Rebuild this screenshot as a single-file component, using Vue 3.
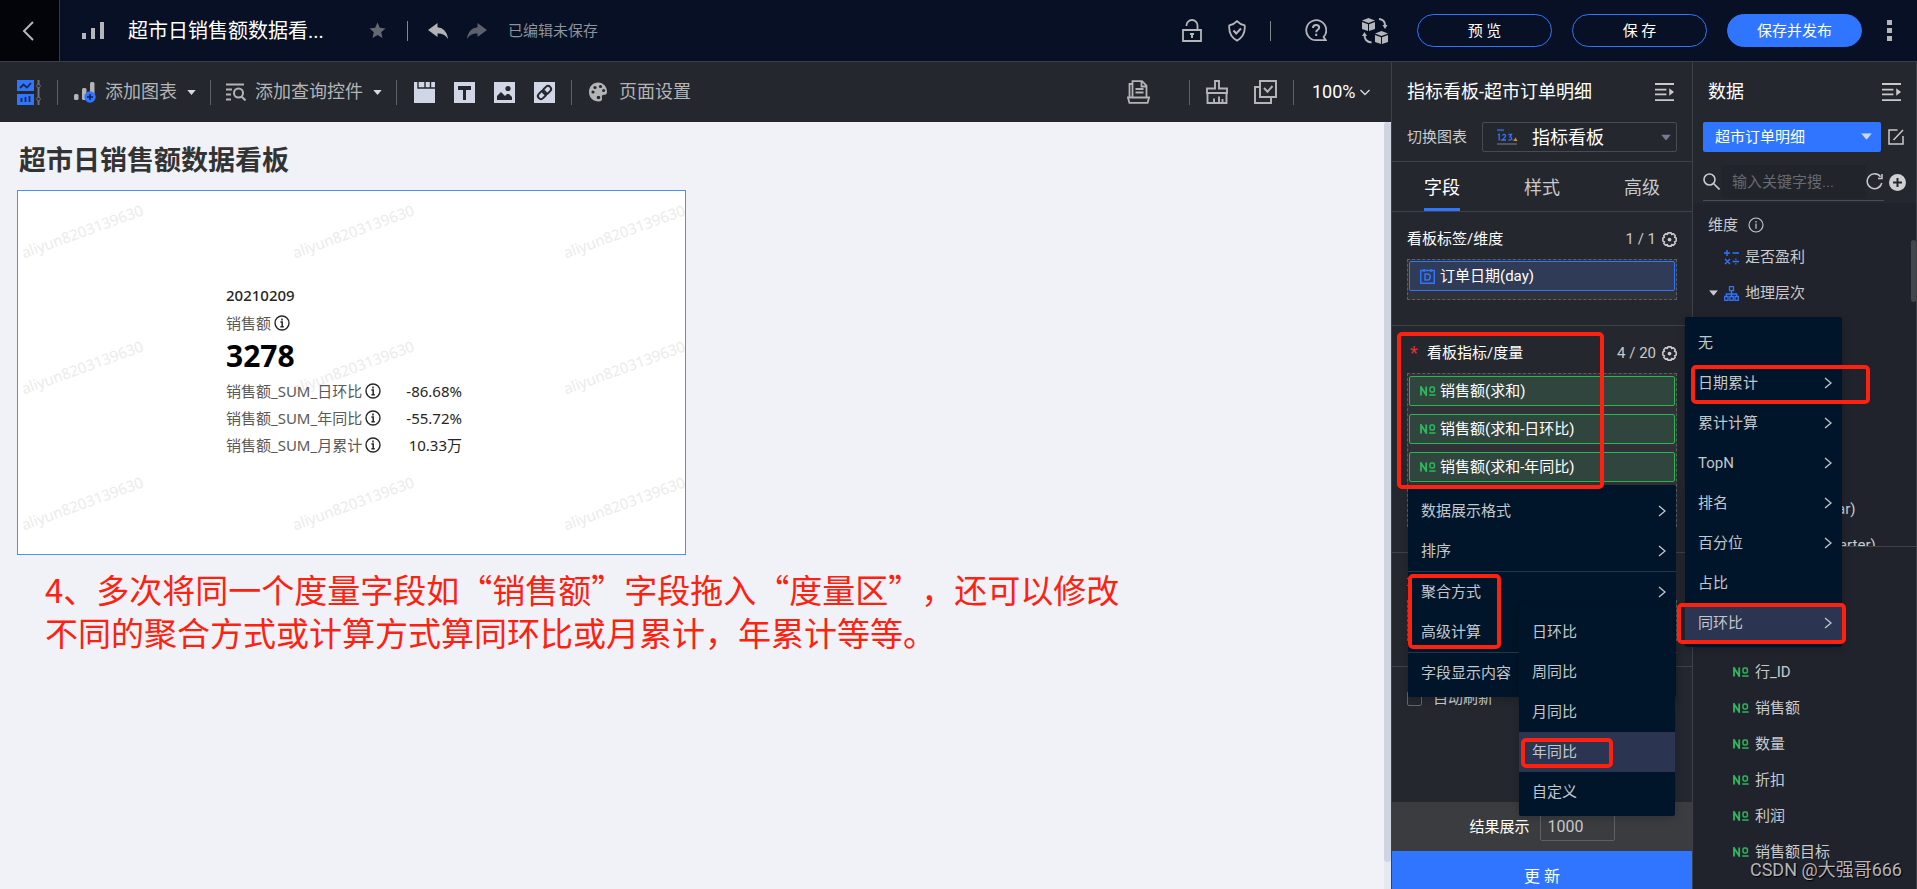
<script setup>
import { ref } from 'vue'

const chartType = ref('指标看板')
const dataset = ref('超市订单明细')
const zoomLevel = ref('100%')
const keyword = ref('')
const limit = ref('1000')
const autoRefresh = ref(false)
const activeTab = ref('字段')

const tabs = ['字段', '样式', '高级']
const measures = ['销售额(求和)', '销售额(求和-日环比)', '销售额(求和-年同比)']
const kpis = [
  { name: '销售额_SUM_日环比', value: '-86.68%' },
  { name: '销售额_SUM_年同比', value: '-55.72%' },
  { name: '销售额_SUM_月累计', value: '10.33万' },
]
const geoFields = ['区域', '省份', '城市', '产品', '订单日期', '订单日期(year)', '订单日期(quarter)']
const measureFields = ['成本', '运费', '行_ID', '销售额', '数量', '折扣', '利润', '销售额目标']
const fieldMenu = [
  { label: '数据展示格式', arrow: true },
  { label: '排序', arrow: true, line: true },
  { label: '聚合方式', arrow: true },
  { label: '高级计算', arrow: true, line: true },
  { label: '字段显示内容', arrow: false },
]
const calcMenu = [
  { label: '无' },
  { label: '日期累计', arrow: true },
  { label: '累计计算', arrow: true },
  { label: 'TopN', arrow: true },
  { label: '排名', arrow: true },
  { label: '百分位', arrow: true },
  { label: '占比' },
  { label: '同环比', arrow: true, on: true },
]
const ratioMenu = [
  { label: '日环比' },
  { label: '周同比' },
  { label: '月同比' },
  { label: '年同比', on: true },
  { label: '自定义' },
]
</script>

<template>
  <div class="app">
    <svg class="sprite" aria-hidden="true">
      <symbol id="i-info" viewBox="0 0 16 16">
        <circle cx="8" cy="8" r="7" fill="none" stroke="currentColor" stroke-width="1.4" />
        <path d="M8 3.6v2M6.4 7h1.8v4.6M6.4 11.8h3.4" fill="none" stroke="currentColor" stroke-width="1.5" />
      </symbol>
      <symbol id="i-info-thin" viewBox="0 0 16 16">
        <circle cx="8" cy="8" r="7" fill="none" stroke="currentColor" stroke-width="1.1" />
        <path d="M8 4v1.4M8 6.6v5.2" fill="none" stroke="currentColor" stroke-width="1.2" />
      </symbol>
      <symbol id="i-gear" viewBox="0 0 16 16">
        <path d="M6.300 .9h3.400l.6 1.700 1.700-.8 2.200 2.200-.8 1.700 1.700.6v3.400l-1.700.6.8 1.700-2.200 2.200-1.700-.8-.6 1.700H6.300l-.6-1.700-1.700.8L1.800 12l.8-1.700L.9 9.700V6.300l1.700-.6L1.800 4 4 1.800l1.700.8z" fill="none" stroke="currentColor" stroke-width="1.700" stroke-linejoin="round" />
        <circle cx="8" cy="8" r="2" fill="currentColor" />
      </symbol>
      <symbol id="i-fold" viewBox="0 0 20 20">
        <path d="M0 1.5h20M0 7.500h12M0 12.500h12M0 18.500h20" fill="none" stroke="currentColor" stroke-width="2" />
        <path d="M15 6l5 4-5 4z" fill="currentColor" />
      </symbol>
      <symbol id="i-right" viewBox="0 0 8 12">
        <path d="M1 1l6 5-6 5" fill="none" stroke="currentColor" stroke-width="1.3" />
      </symbol>
      <symbol id="i-caret" viewBox="0 0 10 6">
        <path d="M0 0h10L5 6z" fill="currentColor" />
      </symbol>
      <symbol id="i-no" viewBox="0 0 16 10">
        <path d="M1 9.5V1l5.2 8V.5" fill="none" stroke="currentColor" stroke-width="1.8" />
        <rect x="10" y="1" width="4.4" height="5" rx="1.6" fill="none" stroke="currentColor" stroke-width="1.5" />
        <path d="M9.2 9h6.4" stroke="currentColor" stroke-width="1.5" />
      </symbol>
    </svg>

    <header class="topbar">
      <button class="back" aria-label="返回">
        <svg width="12" height="20" viewBox="0 0 12 20"><path d="M11 1L2 10l9 9" fill="none" stroke="currentColor" stroke-width="2" /></svg>
      </button>
      <svg class="logo" width="22" height="18" viewBox="0 0 22 18"><path d="M0 11h4v6H0zM9 6h4v11H9zM18 0h4v17h-4z" fill="#b5b6b9" /></svg>
      <h1 class="doc-title">超市日销售额数据看...</h1>
      <button class="star" aria-label="收藏">
        <svg width="17" height="17" viewBox="0 0 17 17"><path d="M8.500 .5l2.300 5.300 5.700.6-4.300 3.800 1.300 5.800-5-3-5 3 1.300-5.800L.5 6.400l5.700-.6z" fill="#646872" /></svg>
      </button>
      <span class="vline"></span>
      <button class="undo" aria-label="撤销">
        <svg width="20" height="16" viewBox="0 0 20 16"><path d="M9.500 0v4.200C15.500 4.800 19.300 9 20 16c-2.500-4.200-5.500-5.600-10.500-5.600V14L0 7z" fill="#b2b3b5" /></svg>
      </button>
      <button class="redo" aria-label="重做">
        <svg width="20" height="16" viewBox="0 0 20 16"><path d="M10.500 0v4.200C4.500 4.800.7 9 0 16c2.500-4.200 5.500-5.600 10.500-5.600V14L20 7z" fill="#5c606b" /></svg>
      </button>
      <span class="saved">已编辑未保存</span>

      <div class="top-right">
        <button class="tb" aria-label="解锁">
          <svg width="20" height="23" viewBox="0 0 20 23"><path d="M1 11h18v11H1zM4.500 7V6.500a5.500 5.500 0 0 1 11 0V11" fill="none" stroke="currentColor" stroke-width="1.800" /><path d="M8 14h4v2h-1v3H9v-3H8z" fill="currentColor" /></svg>
        </button>
        <button class="tb shield" aria-label="权限">
          <svg width="18" height="22" viewBox="0 0 18 22"><path d="M9 1.200C7 3.500 4 4.800 1.300 5.400c-.6 6 1 11.600 7.700 15.200 6.700-3.600 8.300-9.200 7.700-15.200C14 4.800 11 3.500 9 1.200z" fill="none" stroke="currentColor" stroke-width="1.800" /><path d="M5.500 10.500L8.200 13.500l4.800-5" fill="none" stroke="currentColor" stroke-width="2" /></svg>
        </button>
        <span class="vline"></span>
        <button class="tb help" aria-label="帮助">
          <svg width="22" height="23" viewBox="0 0 22 23"><path d="M20.800 21.200H11A10 10 0 1 1 18.600 18z" fill="none" stroke="currentColor" stroke-width="1.800" /><path d="M8 9c0-4 6.200-3.600 6.200-.4 0 2.200-3 2.200-3 4.600M11.200 14.800V17" fill="none" stroke="currentColor" stroke-width="2" /></svg>
        </button>
        <button class="tb cubes" aria-label="资源">
          <svg width="26" height="26" viewBox="0 0 26 26"><g fill="currentColor"><path d="M0 2.500L6.500 0 13 2.500 6.500 5zM0 4l6 2.200V13l-6-2zM13 4L7 6.200V13l6-2zM13 15.500l6.500-2.500 6.500 2.500-6.500 2.500zM13 17l6 2.200V26l-6-2zM26 17l-6 2.200V26l6-2zM20.500 7h5l-2.500 4zM0 18h5l-2.500-4z" /></g><path d="M17 1c4 .5 6 3 6 6M2.500 17c0 4 2.500 7 7 7.500" fill="none" stroke="currentColor" stroke-width="2" /></svg>
        </button>
        <button class="pill">预 览</button>
        <button class="pill">保 存</button>
        <button class="pill primary">保存并发布</button>
        <button class="tb kebab" aria-label="更多">
          <svg width="6" height="21" viewBox="0 0 6 21"><path d="M1 0h5v5H1zM1 8h5v5H1zM1 16h5v5H1z" fill="currentColor" /></svg>
        </button>
      </div>
    </header>

    <div class="main">
      <section class="work">
        <div class="toolbar">
          <button class="tool" aria-label="布局">
            <svg width="24" height="25" viewBox="0 0 24 25"><path d="M0 0h17v11H0zM0 14h17v11H0z" fill="#2f75ff" /><path d="M3 8l3.500-3.500L10 7.500l4-4.500M4.500 22v-4M8.500 22v-5M12.500 22v-6" fill="none" stroke="#1d2a48" stroke-width="1.800" /><path d="M21.500 0v25" stroke="#6d7076" stroke-width="2" /><circle cx="21.500" cy="6" r="1.800" fill="#24272e" stroke="#6d7076" /><circle cx="21.500" cy="19" r="1.800" fill="#24272e" stroke="#6d7076" /></svg>
          </button>
          <span class="sep"></span>
          <button class="tool text">
            <svg width="22" height="21" viewBox="0 0 22 21"><rect y="12" width="4.500" height="6" rx="1.500" fill="#b3b4b6" /><rect x="8" y="6" width="4.500" height="12" rx="1.500" fill="#b3b4b6" /><rect x="16" width="4.500" height="18" rx="1.500" fill="#b3b4b6" /><circle cx="16" cy="15" r="5.700" fill="#2f75ff" /><path d="M13 15h6M16 12v6" stroke="#0e2352" stroke-width="1.500" /></svg>
            <span>添加图表</span>
            <svg class="caret" width="9" height="5"><use href="#i-caret" /></svg>
          </button>
          <span class="sep"></span>
          <button class="tool text query">
            <svg width="20" height="18" viewBox="0 0 20 18"><path d="M0 1.500h18M0 6.500h6M0 11.500h5M0 16.500h5" stroke="#b3b4b6" stroke-width="2" /><circle cx="12.500" cy="10" r="4.500" fill="none" stroke="#b3b4b6" stroke-width="2" /><path d="M15.500 13.500l4 4" stroke="#b3b4b6" stroke-width="2" /></svg>
            <span>添加查询控件</span>
            <svg class="caret" width="9" height="5"><use href="#i-caret" /></svg>
          </button>
          <span class="sep"></span>
          <div class="squares">
            <button aria-label="页签"><svg width="21" height="21" viewBox="0 0 21 21"><path d="M0 0h21v21H0z" fill="#d0d6e6" /><path d="M4 0v6h17M11 0v5.500M16.500 0v5.500" fill="none" stroke="#24272e" stroke-width="1.400" /></svg></button>
            <button aria-label="文本"><svg width="21" height="21" viewBox="0 0 21 21"><path d="M0 0h21v21H0z" fill="#d0d6e6" /><path d="M4 4h13v4h-5v10H9V8H4z" fill="#24272e" /></svg></button>
            <button aria-label="图片"><svg width="21" height="21" viewBox="0 0 21 21"><path d="M0 0h21v21H0z" fill="#d0d6e6" /><path d="M3 18v-4l4-4 4 4 2-2h2l3 3v3z" fill="#24272e" /><circle cx="14" cy="6.500" r="2.600" fill="#24272e" /></svg></button>
            <button aria-label="链接"><svg width="21" height="21" viewBox="0 0 21 21"><path d="M0 0h21v21H0z" fill="#d0d6e6" /><g transform="rotate(-45 10.500 10.500)" fill="none" stroke="#24272e" stroke-width="2"><rect x="2.500" y="7.500" width="9" height="6" rx="3" /><rect x="9.500" y="7.500" width="9" height="6" rx="3" /></g></svg></button>
          </div>
          <span class="sep"></span>
          <button class="tool text page-set">
            <svg width="18" height="20" viewBox="0 0 18 20"><path d="M9 .5c5.500 0 9 4.300 9 9.500 0 2-1.200 2.800-3 2.800-2 0-2.400 1-2 3 .4 2.400-.8 3.700-3 3.700C4 19.500 0 15.500 0 10S4 .5 9 .5z" fill="#b3b4b6" /><g fill="#24272e"><circle cx="4" cy="10" r="1.600" /><circle cx="6" cy="5.500" r="1.600" /><circle cx="11.500" cy="4.500" r="1.600" /><circle cx="14.600" cy="8.600" r="1.500" /><circle cx="9.500" cy="15.500" r="1.800" /></g></svg>
            <span>页面设置</span>
          </button>
          <div class="tools-right">
            <button class="tool" aria-label="报告"><svg width="23" height="24" viewBox="0 0 23 24"><g fill="none" stroke="currentColor" stroke-width="1.800"><path d="M5.500 17V1.200H15l4.500 4.500V17M14.500 1.500v5h5M8.500 9h8M8.500 12.500h8M2.500 17V4h3M.9 17.500h21.200l-1.500 5.300H2.400z" /></g></svg></button>
            <span class="sep"></span>
            <button class="tool" aria-label="清理"><svg width="22" height="24" viewBox="0 0 22 24"><g fill="none" stroke="currentColor" stroke-width="1.900"><path d="M1 13V8.500h8V1h4v7.500h8V13zM1.500 13v10h19V13M8 23v-4.500M13 23v-6.500M16.500 23v-4" /></g></svg></button>
            <button class="tool multi" aria-label="多选"><svg width="23" height="24" viewBox="0 0 23 24"><g fill="none" stroke="currentColor" stroke-width="2"><path d="M6 1h16v16H6zM6 7H1v16h16v-6M10 8l3.500 3.800L18.500 6" /></g></svg></button>
            <span class="sep"></span>
            <label class="zoom">
              <select v-model="zoomLevel" aria-label="缩放比例"><option>100%</option></select>
              <svg width="10" height="7" viewBox="0 0 10 7"><path d="M.5 1L5 5.500 9.500 1" fill="none" stroke="#d8d9db" stroke-width="1.400" /></svg>
            </label>
          </div>
        </div>

        <div class="canvas">
          <h2 class="board-title">超市日销售额数据看板</h2>
          <div class="card">
            <div class="marks" aria-hidden="true">
              <span v-for="n in 9" :key="n">aliyun8203139630</span>
            </div>
            <div class="kpi">
              <div class="date">20210209</div>
              <div class="metric">销售额 <svg width="16" height="16"><use href="#i-info" /></svg></div>
              <div class="big">3278</div>
              <div v-for="k in kpis" :key="k.name" class="row">
                <span class="name">{{ k.name }} <svg width="16" height="16"><use href="#i-info" /></svg></span>
                <span class="val">{{ k.value }}</span>
              </div>
            </div>
          </div>
          <p class="note">4、多次将同一个度量字段如“销售额”字段拖入“度量区”，还可以修改<br />不同的聚合方式或计算方式算同环比或月累计，年累计等等。</p>
          <div class="canvas-bar"><i></i></div>
        </div>
      </section>

      <section class="config">
        <div class="panel-head">
          <h3>指标看板-超市订单明细</h3>
          <button aria-label="收起"><svg width="19" height="20"><use href="#i-fold" /></svg></button>
        </div>
        <div class="switch">
          <label for="chart-type">切换图表</label>
          <div class="chart-select">
            <svg class="num" width="21" height="16" viewBox="0 0 21 16"><path d="M0 1h7" stroke="#2b56b0" stroke-width="2.500" /><path d="M0 15h20" stroke="#5c5f64" stroke-width="1.600" /><path d="M1 6l1.200-.8v6.300M5.500 6.500c.5-1.600 3.500-1.400 3 .8L5.500 11h3.600M11.500 5.500h3L13 7.800c2.300.2 2.200 3.200-.2 3.200h-1.300M3.800 11h.8M15.600 11h.8" fill="none" stroke="#2f75ff" stroke-width="1.300" /><path d="M16.500 12l2-3.500 2 3.500z" fill="#e8862c" /></svg>
            <select id="chart-type" v-model="chartType"><option>指标看板</option></select>
            <svg class="down" width="10" height="7" viewBox="0 0 10 6"><use href="#i-caret" /></svg>
          </div>
        </div>
        <nav class="tabs">
          <button v-for="t in tabs" :key="t" :class="{ on: t === activeTab }" @click="activeTab = t"><span>{{ t }}</span></button>
        </nav>
        <div class="fields">
          <div class="group">
            <div class="group-head"><b>看板标签/维度</b><span>1 / 1</span><svg width="15" height="15"><use href="#i-gear" /></svg></div>
            <div class="zone">
              <div class="chip dim">
                <svg width="15" height="15" viewBox="0 0 15 15"><path d="M.7 1.500h13.600v12.800H.7zM4 0v3M11 0v3M5 5h2.500c3.600 0 3.600 6 0 6H5z" fill="none" stroke="#2f75ff" stroke-width="1.500" /></svg>
                <span>订单日期(day)</span>
              </div>
            </div>
          </div>
          <div class="group">
            <div class="group-head"><em>*</em><b>看板指标/度量</b><span>4 / 20</span><svg width="15" height="15"><use href="#i-gear" /></svg></div>
            <div class="zone tall">
              <div v-for="m in measures" :key="m" class="chip">
                <svg class="no" width="16" height="10"><use href="#i-no" /></svg>
                <span>{{ m }}</span>
              </div>
            </div>
          </div>
          <div class="group">
            <div class="group-head"><b>过滤器</b></div>
            <div class="zone"></div>
          </div>
          <label class="auto"><input v-model="autoRefresh" type="checkbox" />自动刷新</label>
        </div>
        <div class="result">
          <label for="limit">结果展示</label>
          <input id="limit" v-model="limit" type="text" />
        </div>
        <button class="update">更 新</button>
      </section>

      <section class="data">
        <div class="panel-head">
          <h3>数据</h3>
          <button aria-label="收起"><svg width="19" height="20"><use href="#i-fold" /></svg></button>
        </div>
        <div class="dataset">
          <div class="ds-select">
            <select v-model="dataset" aria-label="数据集"><option>超市订单明细</option></select>
            <svg class="down" width="11" height="7" viewBox="0 0 10 6"><use href="#i-caret" /></svg>
          </div>
          <button aria-label="编辑数据集"><svg width="16" height="16" viewBox="0 0 16 16"><path d="M9.500 1H1v14h14V7M5.500 11L15 1" fill="none" stroke="currentColor" stroke-width="1.500" /></svg></button>
        </div>
        <div class="search">
          <div class="search-line">
            <svg width="17" height="17" viewBox="0 0 17 17"><circle cx="6.500" cy="6.500" r="5.500" fill="none" stroke="#c9cacc" stroke-width="1.600" /><path d="M10.500 10.500l6 6" stroke="#c9cacc" stroke-width="1.600" /></svg>
            <input v-model="keyword" type="text" placeholder="输入关键字搜..." aria-label="搜索字段" />
            <button aria-label="刷新"><svg width="17" height="17" viewBox="0 0 17 17"><path d="M14.500 3.800A7.400 7.400 0 1 0 15.800 10M16 1v4.500h-4" fill="none" stroke="#c9cacc" stroke-width="1.500" /></svg></button>
          </div>
          <button class="add" aria-label="新建字段"><svg width="17" height="17" viewBox="0 0 17 17"><circle cx="8.500" cy="8.500" r="8.500" fill="#cfd0d2" /><path d="M4 8.500h9M8.500 4v9" stroke="#24272e" stroke-width="2" /></svg></button>
        </div>
        <div class="list dims">
          <div class="list-head">维度 <svg width="16" height="16"><use href="#i-info-thin" /></svg></div>
          <div class="item root">
            <svg width="15" height="15" viewBox="0 0 15 15"><path d="M0 3h6M3 0v6M8.500 3H15M1 9l5 5M6 9l-5 5M8.500 11.500H15M11.800 8.500v1.300M11.800 13.200v1.300" fill="none" stroke="#2f75ff" stroke-width="1.400" /></svg>
            <span>是否盈利</span>
          </div>
          <div class="item parent">
            <svg class="tri" width="9" height="6" viewBox="0 0 10 6"><use href="#i-caret" /></svg>
            <svg width="15" height="15" viewBox="0 0 15 15"><path d="M5.500.7h4v4h-4zM.7 10.500h3.300v3.800H.7zM5.900 10.500h3.300v3.800H5.900zM11 10.500h3.300v3.800H11zM7.500 5v5.500M2.300 10.500V8h10.400v2.500" fill="none" stroke="#2f75ff" stroke-width="1.300" /></svg>
            <span>地理层次</span>
          </div>
          <div v-for="f in geoFields" :key="f" class="item child"><span>{{ f }}</span></div>
          <i class="bar"></i>
        </div>
        <div class="list vals">
          <div class="list-head">度量</div>
          <div v-for="f in measureFields" :key="f" class="item measure">
            <svg class="no" width="16" height="10"><use href="#i-no" /></svg>
            <span>{{ f }}</span>
          </div>
        </div>
      </section>
    </div>

    <ul class="menu field-menu">
      <li v-for="m in fieldMenu" :key="m.label" :class="{ line: m.line }">
        <button><span>{{ m.label }}</span><svg v-if="m.arrow" width="8" height="12"><use href="#i-right" /></svg></button>
      </li>
    </ul>
    <ul class="menu ratio-menu">
      <li v-for="m in ratioMenu" :key="m.label"><button :class="{ on: m.on }"><span>{{ m.label }}</span></button></li>
    </ul>
    <ul class="menu calc-menu">
      <li v-for="m in calcMenu" :key="m.label">
        <button :class="{ on: m.on }"><span>{{ m.label }}</span><svg v-if="m.arrow" width="8" height="12"><use href="#i-right" /></svg></button>
      </li>
    </ul>

    <i class="frame f-measures"></i>
    <i class="frame f-agg"></i>
    <i class="frame f-date"></i>
    <i class="frame f-ratio"></i>
    <i class="frame f-year"></i>
    <span class="credit">CSDN @大强哥666</span>
  </div>
</template>

<style>
body {
  margin: 0;
  background: #24272e;
}
</style>

<style scoped>
.app {
  position: relative;
  display: flex;
  flex-direction: column;
  height: 100vh;
  overflow: hidden;
  font: 15px/20px Roboto, "Noto Sans CJK SC", sans-serif;
  color: #c9cacc;
  background: #24272e;
}
.app * {
  box-sizing: border-box;
}
.sprite {
  position: absolute;
  width: 0;
  height: 0;
}
svg {
  flex: none;
  display: block;
}
button,
select,
input {
  font: inherit;
  color: inherit;
  background: none;
  border: 0;
  padding: 0;
  margin: 0;
  appearance: none;
  outline: none;
}
h1,
h2,
h3,
p,
ul {
  margin: 0;
  padding: 0;
  font-weight: 400;
}

/* top bar */
.topbar {
  display: flex;
  align-items: center;
  flex: none;
  height: 62px;
  background: #071024;
  border-bottom: 1px solid #3a3e49;
}
.back {
  display: flex;
  align-items: center;
  align-self: stretch;
  width: 60px;
  padding-left: 22px;
  background: #02040a;
  border-right: 1px solid #343842;
  color: #b5b6b9;
}
.logo {
  margin-left: 22px;
}
.doc-title {
  width: 241px;
  margin-left: 24px;
  font-size: 20px;
  line-height: 28px;
  color: #fff;
  white-space: nowrap;
}
.vline {
  width: 1px;
  height: 20px;
  background: #83868d;
}
.star {
  margin-right: 21px;
}
.undo {
  margin-left: 20px;
}
.redo {
  margin: 0 21px 0 19px;
}
.saved {
  color: #8e929b;
}
.top-right {
  display: flex;
  align-items: center;
  margin-left: auto;
  padding-right: 25px;
}
.tb {
  color: #b5b6b9;
}
.shield {
  margin: 0 24px 0 26px;
}
.help {
  margin: 0 35px 0 34px;
}
.cubes {
  margin-right: 29px;
}
.pill {
  width: 135px;
  height: 33px;
  margin-right: 20px;
  border: 1px solid #2f75ff;
  border-radius: 17px;
  color: #fff;
}
.primary {
  background: #2f75ff;
  margin-right: 24px;
}

/* layout */
.main {
  flex: 1;
  min-height: 0;
  display: grid;
  grid-template-columns: minmax(0, 1fr) 301px 225px;
}
.work {
  display: flex;
  flex-direction: column;
  min-width: 0;
}
.toolbar {
  display: flex;
  align-items: center;
  flex: none;
  height: 60px;
  padding-left: 17px;
  color: #b3b4b6;
}
.sep {
  width: 1px;
  height: 25px;
  background: #5e6167;
}
.toolbar > .sep:nth-child(2) {
  margin-left: 16px;
}
.tool.text {
  display: flex;
  align-items: center;
  gap: 9px;
  padding: 0 14px 0 16px;
  font-size: 18px;
  line-height: 26px;
}
.tool.query {
  padding: 0 14px 0 15px;
}
.tool .caret {
  margin-left: 1px;
  color: #d8dae0;
}
.squares {
  display: flex;
  gap: 19px;
  padding: 0 16px 0 17px;
}
.tool.page-set {
  gap: 12px;
  padding-left: 17px;
}
.tools-right {
  display: flex;
  align-items: center;
  margin-left: auto;
  padding-right: 21px;
}
.tools-right .tool:first-child {
  margin-right: 39px;
}
.tools-right .sep + .tool {
  margin-left: 16px;
}
.multi {
  margin: 0 16px 0 26px;
}
.zoom {
  display: flex;
  align-items: center;
  gap: 3px;
  margin-left: 18px;
  color: #fff;
}
.zoom select {
  font-size: 18px;
  width: 45px;
}
.canvas {
  position: relative;
  flex: 1;
  padding: 20px 32px 0 17px;
  background: #f0f2f7;
}
.board-title {
  height: 48px;
  padding-left: 2px;
  font-size: 27px;
  line-height: 38px;
  font-weight: 700;
  color: #333;
}
.card {
  position: relative;
  width: 669px;
  max-width: 100%;
  height: 365px;
  border: 1px solid #4a90f5;
  background: #fff;
  overflow: hidden;
  font-family: "Noto Sans", "Noto Sans CJK SC", sans-serif;
}
.marks {
  position: absolute;
  top: -28px;
  left: -71px;
  display: grid;
  grid-template: repeat(3, 136px) / repeat(3, 271px);
  place-items: center;
  font-size: 15px;
  color: #ebebeb;
}
.marks span {
  transform: rotate(-20deg);
}
.kpi {
  position: relative;
  width: 236px;
  margin: 90px 0 0 208px;
  color: #595959;
}
.kpi svg {
  color: #262626;
}
.date {
  line-height: 28px;
  font-weight: 500;
  color: #262626;
}
.metric,
.name {
  display: flex;
  align-items: center;
  gap: 3px;
  line-height: 28px;
}
.big {
  font-size: 30px;
  line-height: 38px;
  font-weight: 700;
  color: #000;
  padding-bottom: 2px;
}
.row {
  display: flex;
  justify-content: space-between;
  height: 27px;
}
.val {
  line-height: 28px;
  color: #262626;
}
.note {
  padding: 13px 0 0 28px;
  font-family: "Noto Sans CJK SC", sans-serif;
  font-size: 33px;
  line-height: 43px;
  color: #ff2110;
  white-space: nowrap;
  text-spacing-trim: space-all;
}
.canvas-bar {
  position: absolute;
  top: 0;
  right: 0;
  bottom: 0;
  width: 7px;
  background: #e6e9ef;
}
.canvas-bar i {
  display: block;
  height: 740px;
  border-radius: 4px;
  background: #ced4e0;
}

/* side panels */
.config,
.data {
  display: flex;
  flex-direction: column;
  min-height: 0;
  border-left: 1px solid #3e4148;
}
.data {
  border-right: 1px solid #3e4148;
}
.panel-head {
  display: flex;
  align-items: center;
  justify-content: space-between;
  flex: none;
  height: 60px;
  padding: 0 18px 0 15px;
}
.data .panel-head {
  padding-right: 15px;
}
.panel-head h3 {
  font-size: 18px;
  line-height: 26px;
  color: #fff;
  white-space: nowrap;
}
.switch {
  display: flex;
  justify-content: space-between;
  flex: none;
  height: 40px;
  padding: 0 15px;
  line-height: 30px;
  border-bottom: 1px solid #3e4148;
}
.chart-select {
  position: relative;
  width: 195px;
  height: 30px;
}
.chart-select select {
  width: 100%;
  height: 30px;
  padding-left: 49px;
  border: 1px solid #484b51;
  border-radius: 2px;
  font-size: 18px;
  color: #fff;
}
.chart-select .num {
  position: absolute;
  left: 15px;
  top: 7px;
}
.down {
  position: absolute;
  right: 6px;
  top: 12px;
  color: #777d8c;
}
.tabs {
  display: grid;
  grid-template-columns: repeat(3, 1fr);
  flex: none;
  height: 50px;
  border-bottom: 1px solid #3e4148;
  font-size: 18px;
}
.tabs button {
  display: flex;
  justify-content: center;
}
.tabs span {
  height: 49px;
  line-height: 52px;
}
.tabs .on {
  color: #fff;
}
.tabs .on span {
  border-bottom: 3px solid #2f75ff;
}
.fields {
  flex: 1;
  min-height: 0;
  overflow: hidden;
}
.group {
  padding: 17px 15px 25px;
  border-bottom: 1px solid #3e4148;
}
.group-head {
  display: flex;
  align-items: center;
  height: 20px;
  margin-bottom: 10px;
}
.group-head b {
  flex: 1;
  font-weight: 400;
  color: #fff;
}
.group-head em {
  width: 20px;
  padding-left: 3px;
  font-style: normal;
  font-size: 18px;
  color: #e8322f;
}
.group-head span {
  margin-right: 6px;
}
.zone {
  display: flex;
  flex-direction: column;
  gap: 7px;
  min-height: 41px;
  padding: 1px;
  border: 1px dashed #5b5e63;
  background: #303238;
}
.tall {
  gap: 8px;
  min-height: 154px;
  padding-top: 2px;
}
.chip {
  display: flex;
  align-items: center;
  gap: 4px;
  height: 30px;
  padding-left: 10px;
  border: 1px solid #27b84f;
  border-radius: 2px;
  background: #31453f;
  color: #fff;
}
.chip.dim {
  gap: 5px;
  border-color: #2f75ff;
  background: #303b58;
}
.no {
  color: #2eb85c;
}
.auto {
  display: flex;
  align-items: center;
  gap: 11px;
  padding: 21px 15px 0;
}
.auto input {
  width: 15px;
  height: 15px;
  border: 1px solid #63666b;
  border-radius: 2px;
}
.result {
  display: flex;
  align-items: center;
  justify-content: center;
  gap: 10px;
  flex: none;
  height: 49px;
  background: #3b3c40;
  color: #fff;
}
.result input {
  width: 75px;
  height: 29px;
  padding-left: 7px;
  border: 1px solid #5e6065;
  border-radius: 2px;
  font-size: 16px;
  color: #c9cacc;
}
.update {
  flex: none;
  height: 38px;
  padding-top: 14px;
  font-size: 16px;
  line-height: 24px;
  background: #2f75ff;
  color: #fff;
}

/* data panel */
.dataset {
  display: flex;
  align-items: center;
  justify-content: space-between;
  flex: none;
  padding: 0 12px 0 10px;
}
.ds-select {
  position: relative;
  width: 178px;
}
.ds-select select {
  display: block;
  width: 100%;
  height: 30px;
  padding-left: 12px;
  border-radius: 2px;
  background: #2f75ff;
  color: #fff;
}
.ds-select .down {
  right: 9px;
  top: 11px;
  color: #c8dbff;
}
.search {
  display: flex;
  align-items: center;
  justify-content: space-between;
  flex: none;
  height: 51px;
  padding: 9px 10px 0;
}
.search-line {
  display: flex;
  align-items: center;
  width: 181px;
  height: 38px;
  border-bottom: 1px solid #4a4d53;
}
.search-line input {
  width: 145px;
  height: 33px;
  padding-left: 11px;
  margin-left: 1px;
  background: #21242b;
}
.search-line input::placeholder {
  color: #666a71;
  opacity: 1;
}
.list {
  position: relative;
  background: #20232c;
  overflow: hidden;
}
.dims {
  flex: none;
  height: 344px;
  padding-top: 8px;
  border-bottom: 1px solid #3e4148;
}
.vals {
  flex: 1;
}
.list-head {
  display: flex;
  align-items: center;
  gap: 10px;
  height: 28px;
  padding-left: 15px;
}
.vals .list-head {
  height: 35px;
}
.item {
  display: flex;
  align-items: center;
  gap: 6px;
  height: 36px;
  white-space: nowrap;
}
.root {
  padding-left: 31px;
}
.parent {
  padding-left: 16px;
}
.child {
  padding-left: 64px;
}
.measure {
  padding-left: 40px;
}
.bar {
  position: absolute;
  top: 37px;
  right: 0;
  width: 5px;
  height: 62px;
  border-radius: 3px;
  background: #43464d;
}

/* floating menus */
.menu {
  position: absolute;
  padding: 6px 0 4px;
  list-style: none;
  background: #001529;
  border-radius: 2px;
  box-shadow: 0 2px 8px rgba(0, 0, 0, 0.2);
}
.menu button {
  display: flex;
  align-items: center;
  justify-content: space-between;
  width: 100%;
  height: 40px;
  padding: 0 10px 0 13px;
  color: #c2c7cc;
}
.menu .on {
  background: #2b3450;
}
.menu .line {
  border-bottom: 1px solid #24364a;
}
.field-menu {
  top: 485px;
  right: 241px;
  width: 268px;
}
.ratio-menu {
  top: 606px;
  right: 242px;
  width: 156px;
}
.calc-menu {
  top: 317px;
  right: 75px;
  width: 157px;
}

/* highlight frames */
.frame {
  position: absolute;
  border: 4px solid #ff2110;
  border-radius: 5px;
  pointer-events: none;
}
.f-measures {
  top: 332px;
  right: 313px;
  width: 207px;
  height: 157px;
}
.f-agg {
  top: 574px;
  right: 416px;
  width: 93px;
  height: 75px;
}
.f-date {
  top: 365px;
  right: 47px;
  width: 179px;
  height: 39px;
}
.f-ratio {
  top: 603px;
  right: 71px;
  width: 169px;
  height: 41px;
}
.f-year {
  top: 738px;
  right: 304px;
  width: 92px;
  height: 30px;
}
.credit {
  position: absolute;
  right: 15px;
  bottom: 7px;
  font-size: 18px;
  line-height: 24px;
  color: #b3b5b9;
  text-shadow: 1px 1px 1px #000;
}
</style>
